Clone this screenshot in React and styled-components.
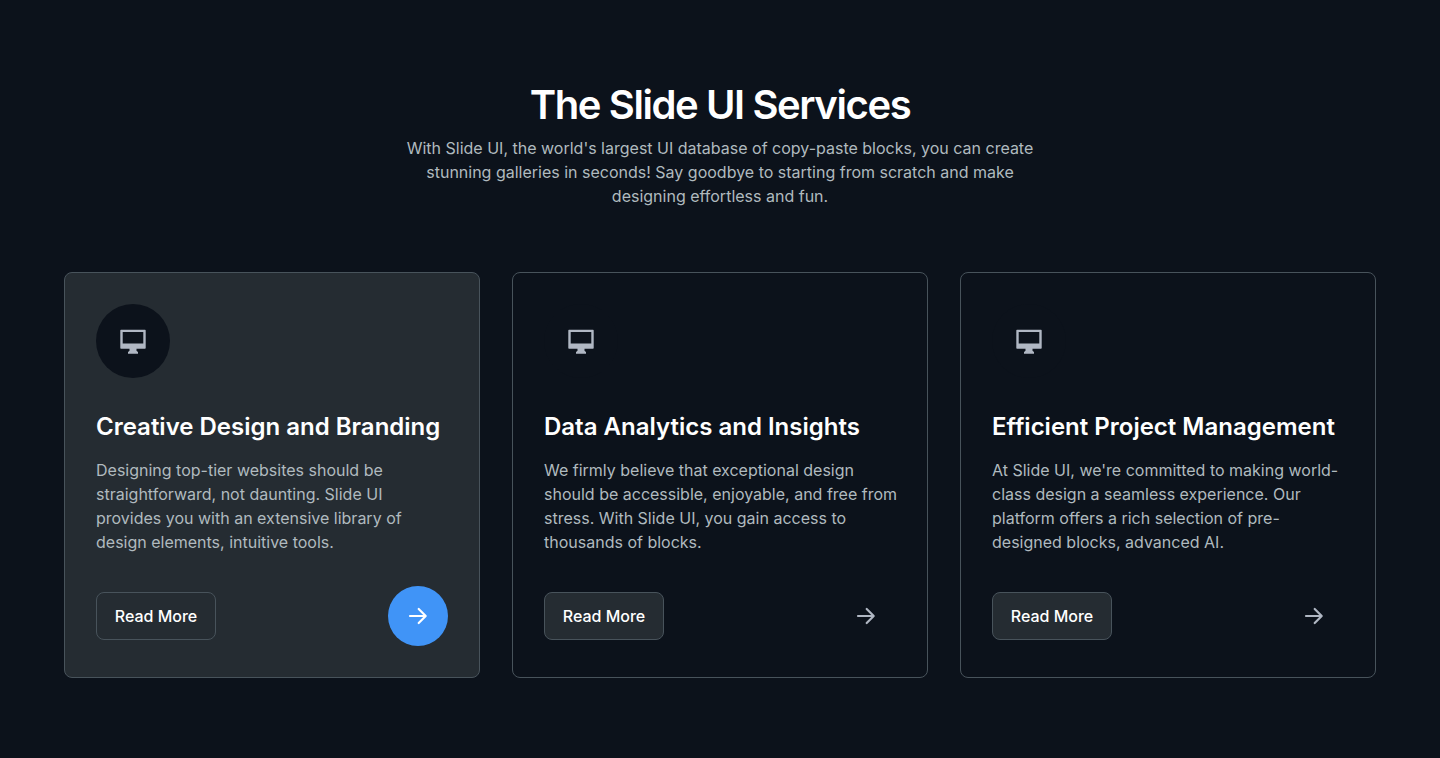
import React from "react";
import styled, { createGlobalStyle } from "styled-components";

const colors = {
  page: "#0c121b",
  surface: "#252c32",
  border: "#48535b",
  text: "#b0babf",
  icon: "#b0b7c3",
  heading: "#ffffff",
  accent: "#4094f7",
};

const GlobalStyle = createGlobalStyle`
  *, *::before, *::after { box-sizing: border-box; }
  body {
    margin: 0;
    background: ${colors.page};
    color: ${colors.text};
    font-family: Inter, "Liberation Sans", sans-serif;
    font-size: 16px;
    line-height: 24px;
    -webkit-font-smoothing: antialiased;
  }
`;

const Section = styled.main`
  display: flex;
  flex-direction: column;
  gap: 64px;
  padding: 80px 64px;
`;

const Header = styled.header`
  display: flex;
  flex-direction: column;
  align-items: center;
  gap: 6px;
  text-align: center;
`;

const Heading = styled.h1`
  margin: 0;
  color: ${colors.heading};
  font-size: 40px;
  font-weight: 600;
  line-height: 50px;
  letter-spacing: -0.035em;
`;

const Intro = styled.p`
  margin: 0;
  max-width: 640px;
`;

const Grid = styled.div`
  display: grid;
  grid-template-columns: repeat(3, minmax(0, 1fr));
  gap: 32px;

  @media (max-width: 1000px) {
    grid-template-columns: 1fr;
  }
`;

const Card = styled.article`
  display: flex;
  flex-direction: column;
  gap: 32px;
  padding: 31px;
  border: 1px solid ${colors.border};
  border-radius: 8px;
  background: ${(p) => (p.$active ? colors.surface : colors.page)};
`;

const IconCircle = styled.div`
  display: flex;
  align-items: center;
  justify-content: center;
  width: 74px;
  height: 74px;
  border-radius: 50%;
  background: ${colors.page};
  color: ${colors.icon};
`;

const CardBody = styled.div`
  display: flex;
  flex: 1;
  flex-direction: column;
  gap: 14px;
  margin-right: -4px;
`;

const CardTitle = styled.h2`
  margin: 0;
  color: ${colors.heading};
  font-size: 24px;
  font-weight: 600;
  line-height: 34px;
`;

const CardText = styled.p`
  margin: 0;
`;

const CardFooter = styled.footer`
  display: flex;
  align-items: center;
  justify-content: space-between;
`;

const ReadMore = styled.button`
  width: 120px;
  height: 48px;
  padding: 0;
  border: 1px solid ${colors.border};
  border-radius: 8px;
  background: ${colors.surface};
  color: ${colors.heading};
  font: inherit;
  font-weight: 500;
  cursor: pointer;
`;

const ArrowButton = styled.button`
  display: flex;
  align-items: center;
  justify-content: center;
  width: 60px;
  height: 60px;
  padding: 0;
  border: 0;
  border-radius: 50%;
  background: ${(p) => (p.$active ? colors.accent : "transparent")};
  color: ${(p) => (p.$active ? colors.heading : colors.icon)};
  cursor: pointer;
`;

const MonitorIcon = () => (
  <svg width="26" height="26" viewBox="0 0 26 26" fill="currentColor" aria-hidden="true">
    <path
      fillRule="evenodd"
      d="M1 1.700h24a.7.7 0 0 1 .7.7v17.600a.7.7 0 0 1-.7.7h-8.500v2l1.500 1.200v1.800H8v-1.800l1.500-1.200v-2H1a.7.7 0 0 1-.7-.7V2.400A.7.7 0 0 1 1 1.700Zm1.700 2.300v11.500h20.600V4H2.700Z"
    />
  </svg>
);

const ArrowIcon = () => (
  <svg
    width="24"
    height="24"
    viewBox="0 0 24 24"
    fill="none"
    stroke="currentColor"
    strokeWidth="2.200"
    strokeLinejoin="round"
    strokeLinecap="round"
    aria-hidden="true"
  >
    <path d="M4 12h15.500M12.700 5l7 7-7 7" />
  </svg>
);

const services = [
  {
    title: "Creative Design and Branding",
    text: "Designing top-tier websites should be straightforward, not daunting. Slide UI provides you with an extensive library of design elements, intuitive tools.",
    active: true,
  },
  {
    title: "Data Analytics and Insights",
    text: "We firmly believe that exceptional design should be accessible, enjoyable, and free from stress. With Slide UI, you gain access to thousands of blocks.",
  },
  {
    title: "Efficient Project Management",
    text: "At Slide UI, we're committed to making world-class design a seamless experience. Our platform offers a rich selection of pre-designed blocks, advanced AI.",
  },
];

export default function App() {
  return (
    <>
      <GlobalStyle />
      <Section>
        <Header>
          <Heading>The Slide UI Services</Heading>
          <Intro>
            With Slide UI, the world's largest UI database of copy-paste blocks, you can create
            stunning galleries in seconds! Say goodbye to starting from scratch and make designing
            effortless and fun.
          </Intro>
        </Header>
        <Grid>
          {services.map(({ title, text, active }) => (
            <Card key={title} $active={active}>
              <IconCircle>
                <MonitorIcon />
              </IconCircle>
              <CardBody>
                <CardTitle>{title}</CardTitle>
                <CardText>{text}</CardText>
              </CardBody>
              <CardFooter>
                <ReadMore type="button">Read More</ReadMore>
                <ArrowButton type="button" $active={active} aria-label={`Open ${title}`}>
                  <ArrowIcon />
                </ArrowButton>
              </CardFooter>
            </Card>
          ))}
        </Grid>
      </Section>
    </>
  );
}
